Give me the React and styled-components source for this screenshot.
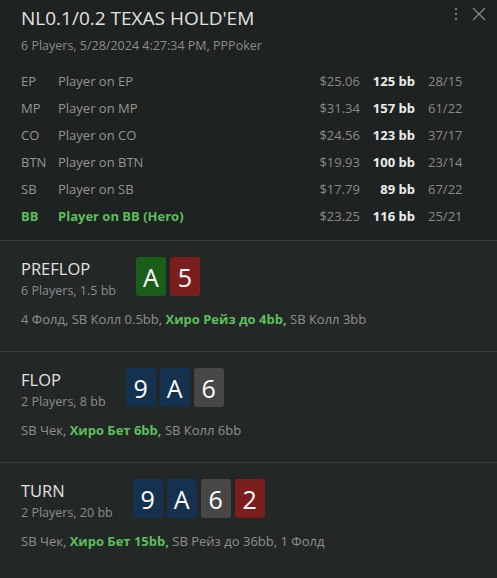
import React from "react";
import styled, { createGlobalStyle } from "styled-components";

const GlobalStyle = createGlobalStyle`
  html, body {
    margin: 0;
    padding: 0;
    background: #232827;
  }
  body {
    font-family: "Open Sans", "Noto Sans", sans-serif;
  }
`;

const Panel = styled.div`
  width: 497px;
  height: 578px;
  overflow: hidden;
  background: #232827;
  color: #9a9a9a;
`;

const Header = styled.div`
  position: relative;
  background: #1e2221;
  padding: 6px 0 11px 21px;
  border-bottom: 1px solid #3a3f3e;
`;

const Title = styled.div`
  font-size: 19px;
  line-height: 24px;
  color: #e2e2e2;
`;

const Subtitle = styled.div`
  font-size: 12.5px;
  line-height: 18px;
  color: #8c8c8c;
  margin-top: ${(p) => p.gap || 0}px;
`;

const Controls = styled.div`
  position: absolute;
  top: 6px;
  right: 10px;
  display: flex;
  align-items: center;
  gap: 13px;
`;

const PlayerList = styled.div`
  margin-top: 12px;
`;

const PlayerRow = styled.div`
  display: grid;
  grid-template-columns: 37px 1fr 60px 55px 82px;
  height: 27px;
  align-items: center;
  font-size: 13px;
  color: ${(p) => (p.hero ? "#5cbf5c" : "#959595")};
  font-weight: ${(p) => (p.hero ? 700 : 400)};
`;

const Money = styled.span`
  text-align: right;
  color: #8a8a8a;
  font-weight: 400;
`;

const Stack = styled.span`
  text-align: right;
  color: #ececec;
  font-weight: 700;
`;

const Ratio = styled.span`
  padding-left: 13px;
  color: #8a8a8a;
  font-weight: 400;
`;

const Street = styled.div`
  padding: 16px 0 23px 21px;
  border-bottom: ${(p) => (p.last ? "none" : "1px solid #3a3f3e")};
`;

const StreetTop = styled.div`
  display: flex;
  align-items: flex-start;
  gap: 20px;
`;

const StreetInfo = styled.div`
  padding-top: 1px;
`;

const StreetName = styled.div`
  font-size: 16.5px;
  line-height: 22px;
  color: #e2e2e2;
`;

const Cards = styled.div`
  display: flex;
  gap: 4px;
`;

const cardColors = {
  green: "#1b5e1a",
  red: "#7b1e1e",
  blue: "#14324f",
  gray: "#474747",
};

const Card = styled.div`
  width: 30px;
  height: 39px;
  border-radius: 3px;
  background: ${(p) => cardColors[p.color]};
  color: #ffffff;
  font-size: 25px;
  display: flex;
  align-items: center;
  justify-content: center;
`;

const Actions = styled.div`
  margin-top: 10px;
  font-size: 13px;
  line-height: 18px;
  color: #8f8f8f;
`;

const Hero = styled.span`
  color: #5cbf5c;
  font-weight: 700;
`;

const players = [
  { pos: "EP", name: "Player on EP", money: "$25.06", bb: "125 bb", ratio: "28/15" },
  { pos: "MP", name: "Player on MP", money: "$31.34", bb: "157 bb", ratio: "61/22" },
  { pos: "CO", name: "Player on CO", money: "$24.56", bb: "123 bb", ratio: "37/17" },
  { pos: "BTN", name: "Player on BTN", money: "$19.93", bb: "100 bb", ratio: "23/14" },
  { pos: "SB", name: "Player on SB", money: "$17.79", bb: "89 bb", ratio: "67/22" },
  { pos: "BB", name: "Player on BB (Hero)", money: "$23.25", bb: "116 bb", ratio: "25/21", hero: true },
];

const streets = [
  {
    name: "PREFLOP",
    info: "6 Players, 1.5 bb",
    cards: [["A", "green"], ["5", "red"]],
    before: "4 Фолд, SB Колл 0.5bb, ",
    hero: "Хиро Рейз до 4bb,",
    after: " SB Колл 3bb",
  },
  {
    name: "FLOP",
    info: "2 Players, 8 bb",
    cards: [["9", "blue"], ["A", "blue"], ["6", "gray"]],
    before: "SB Чек, ",
    hero: "Хиро Бет 6bb,",
    after: " SB Колл 6bb",
  },
  {
    name: "TURN",
    info: "2 Players, 20 bb",
    cards: [["9", "blue"], ["A", "blue"], ["6", "gray"], ["2", "red"]],
    before: "SB Чек, ",
    hero: "Хиро Бет 15bb,",
    after: " SB Рейз до 36bb, 1 Фолд",
  },
];

const App = () => {
  return (
    <Panel>
      <GlobalStyle />
      <Header>
        <Title>NL0.1/0.2 TEXAS HOLD'EM</Title>
        <Subtitle gap={7}>6 Players, 5/28/2024 4:27:34 PM, PPPoker</Subtitle>
        <Controls>
          <svg width="4" height="14" viewBox="0 0 4 14">
            <circle cx="2" cy="2" r="1.2" fill="#7a7a7a" />
            <circle cx="2" cy="7" r="1.2" fill="#7a7a7a" />
            <circle cx="2" cy="12" r="1.2" fill="#7a7a7a" />
          </svg>
          <svg width="16" height="16" viewBox="0 0 16 16">
            <path d="M2 2 L14 14 M14 2 L2 14" stroke="#8a8a8a" strokeWidth="1.3" />
          </svg>
        </Controls>
        <PlayerList>
          {players.map((p) => (
            <PlayerRow key={p.pos} hero={p.hero}>
              <span>{p.pos}</span>
              <span>{p.name}</span>
              <Money>{p.money}</Money>
              <Stack>{p.bb}</Stack>
              <Ratio>{p.ratio}</Ratio>
            </PlayerRow>
          ))}
        </PlayerList>
      </Header>
      {streets.map((s, i) => (
        <Street key={s.name} last={i === streets.length - 1}>
          <StreetTop>
            <StreetInfo>
              <StreetName>{s.name}</StreetName>
              <Subtitle gap={2}>{s.info}</Subtitle>
            </StreetInfo>
            <Cards>
              {s.cards.map(([rank, color], j) => (
                <Card key={j} color={color}>
                  {rank}
                </Card>
              ))}
            </Cards>
          </StreetTop>
          <Actions>
            {s.before}
            <Hero>{s.hero}</Hero>
            {s.after}
          </Actions>
        </Street>
      ))}
    </Panel>
  );
};

export default App;
